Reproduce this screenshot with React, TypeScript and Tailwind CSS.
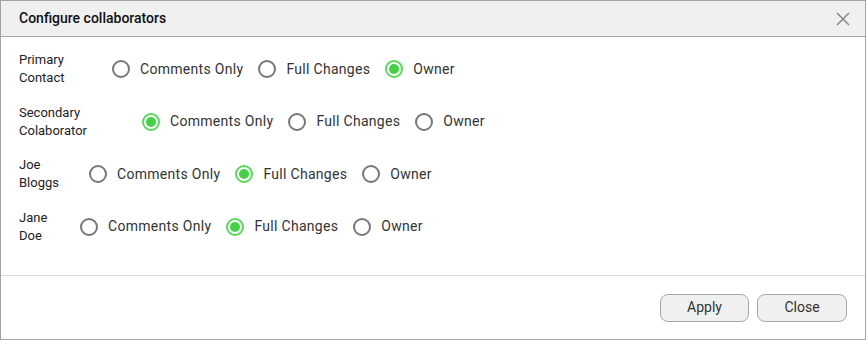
import { useState } from "react";

type Level = "comments" | "full" | "owner";

const OPTIONS: { value: Level; label: string }[] = [
  { value: "comments", label: "Comments Only" },
  { value: "full", label: "Full Changes" },
  { value: "owner", label: "Owner" },
];

const PEOPLE: { id: string; name: string; width: string; level: Level }[] = [
  { id: "primary", name: "Primary Contact", width: "w-[93px]", level: "owner" },
  { id: "secondary", name: "Secondary Colaborator", width: "w-[123px]", level: "comments" },
  { id: "joe", name: "Joe Bloggs", width: "w-[70px]", level: "full" },
  { id: "jane", name: "Jane Doe", width: "w-[61px]", level: "full" },
];

function Radio({ checked, label, onSelect }: { checked: boolean; label: string; onSelect: () => void }) {
  return (
    <button type="button" onClick={onSelect} className="flex items-center">
      <span
        className={`flex h-[18px] w-[18px] items-center justify-center rounded-full border-2 ${
          checked ? "border-[#5ad85a]" : "border-[#777]"
        }`}
      >
        {checked && <span className="h-[10px] w-[10px] rounded-full bg-[#46d046]" />}
      </span>
      <span className="ml-[10px] text-[14px] tracking-[0.3px] text-[#333]">{label}</span>
    </button>
  );
}

export default function App() {
  const [levels, setLevels] = useState<Record<string, Level>>(
    Object.fromEntries(PEOPLE.map((p) => [p.id, p.level]))
  );

  return (
    <div className="flex h-[340px] w-[866px] flex-col border border-[#a3a3a3] bg-white font-['Roboto',sans-serif]">
      <div className="flex h-[36px] shrink-0 items-center justify-between border-b border-[#a3a3a3] bg-[#f0f0f0] pl-[18px] pr-[15px]">
        <h1 className="text-[14px] font-medium text-[#111]">Configure collaborators</h1>
        <button type="button" className="text-[#888]">
          <svg width="14" height="14" viewBox="0 0 14 14" fill="none" stroke="currentColor" strokeWidth="1.5">
            <path d="M1 1 13 13M13 1 1 13" />
          </svg>
        </button>
      </div>

      <div className="flex flex-1 flex-col gap-[16.5px] pl-[18px] pt-[14px]">
        {PEOPLE.map((p) => (
          <div key={p.id} className="flex items-center">
            <div className={`${p.width} shrink-0`}>
              <span className="block w-min text-[13px] leading-[18px] text-[#222]">{p.name}</span>
            </div>
            <div className="flex items-center gap-[15px]">
              {OPTIONS.map((o) => (
                <Radio
                  key={o.value}
                  label={o.label}
                  checked={levels[p.id] === o.value}
                  onSelect={() => setLevels({ ...levels, [p.id]: o.value })}
                />
              ))}
            </div>
          </div>
        ))}
      </div>

      <div className="flex h-[64px] shrink-0 items-center justify-end gap-[8px] border-t border-[#dcdcdc] pr-[18px]">
        <button type="button" className="h-[28px] w-[89px] rounded-[8px] border border-[#a8a8a8] bg-[#f0f0f0] text-[14px] text-[#333]">
          Apply
        </button>
        <button type="button" className="h-[28px] w-[90px] rounded-[8px] border border-[#a8a8a8] bg-[#f0f0f0] text-[14px] text-[#333]">
          Close
        </button>
      </div>
    </div>
  );
}
